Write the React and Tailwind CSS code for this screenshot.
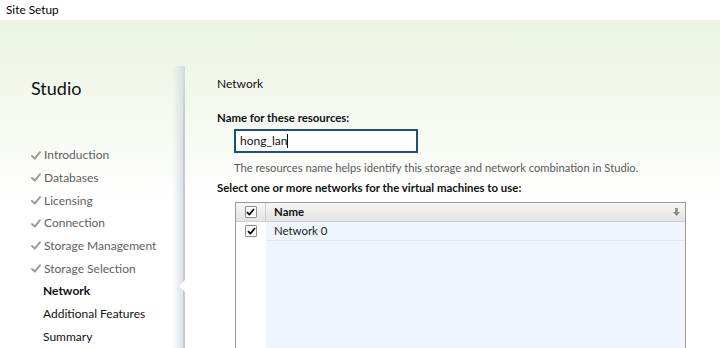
import React from "react";

const font = { fontFamily: 'Lato, "Open Sans", sans-serif' };

function Check({ className = "" }) {
  return (
    <svg width="10" height="9" viewBox="0 0 10 9" className={className}>
      <path d="M1 5 L3.8 7.6 L9 1.2" fill="none" stroke="currentColor" strokeWidth="2" strokeLinecap="round" strokeLinejoin="round" />
    </svg>
  );
}

function Box() {
  return (
    <div className="w-[12px] h-[12px] border border-[#8e8f8f] rounded-[1px] bg-gradient-to-br from-[#f3f3f3] to-white flex items-center justify-center text-[#111]">
      <svg width="9" height="8" viewBox="0 0 9 8">
        <path d="M1 4.2 L3.4 6.6 L8 1" fill="none" stroke="currentColor" strokeWidth="1.8" strokeLinejoin="round" />
      </svg>
    </div>
  );
}

const done = ["Introduction", "Databases", "Licensing", "Connection", "Storage Management", "Storage Selection"];
const todo = ["Network", "Additional Features", "Summary"];

export default function App() {
  return (
    <div className="w-[720px] h-[348px] flex flex-col overflow-hidden bg-white text-[11.4px]" style={font}>
      <div className="h-[25px] flex items-center pl-[6px] text-black bg-white text-[11.8px]">Site Setup</div>
      <div className="flex-1 flex bg-gradient-to-b from-[#ebf3e2] via-[#f5f9f0] via-30% to-white to-55%">
        <div className="relative w-[185px] shrink-0 pl-[31px]">
          <div className="absolute right-0 top-[46px] bottom-0 w-[13px] bg-gradient-to-r from-transparent to-[#d7dce2]" />
          <div className="absolute right-0 top-[46px] bottom-0 w-[2px] bg-gradient-to-b from-transparent via-[#c3c9d0] via-20% to-[#c3c9d0]" />
          <div className="absolute right-0 top-[260px] w-0 h-0 border-y-[6px] border-y-transparent border-r-[6px] border-r-white" />
          <div className="relative pt-[55px] text-[18px] leading-[26px] text-[#111]">Studio</div>
          <div className="relative mt-[43px] flex flex-col">
            {done.map((t) => (
              <div key={t} className="h-[22.7px] flex items-center text-[#606060] text-[12px]">
                <Check className="text-[#9a9a9a] mr-[3px]" />
                <span>{t}</span>
              </div>
            ))}
            {todo.map((t, i) => (
              <div key={t} className={`h-[22.7px] flex items-center pl-[12px] text-[#111] text-[12px] ${i === 0 ? "font-bold" : ""}`}>
                {t}
              </div>
            ))}
          </div>
        </div>
        <div className="flex-1 pl-[32px] flex flex-col text-[#111]">
          <div className="mt-[55px] h-[18px] leading-[18px] text-[12px]">Network</div>
          <div className="mt-[16px] h-[18px] leading-[18px] font-bold">Name for these resources:</div>
          <div className="mt-[2px] ml-[17px] w-[184px] h-[24px] border-2 border-[#1d4f7c] bg-white flex items-center pl-[4px] text-[12px]">
            <span>hong_lan</span>
            <span className="w-[1px] h-[14px] bg-black" />
          </div>
          <div className="mt-[6px] ml-[17px] h-[18px] leading-[18px] text-[#5a5a5a] text-[11.2px]">
            The resources name helps identify this storage and network combination in Studio.
          </div>
          <div className="mt-[2px] h-[18px] leading-[18px] font-bold">Select one or more networks for the virtual machines to use:</div>
          <div className="mt-[5px] ml-[18px] w-[451px] flex-1 border border-[#9a9a9a] border-b-0 flex flex-col bg-white">
            <div className="h-[19px] flex bg-gradient-to-b from-[#f7f7f7] to-[#e3e3e3] border-b border-[#d0d0d0]">
              <div className="w-[30px] border-r border-[#cfcfcf] flex items-center justify-center">
                <Box />
              </div>
              <div className="flex-1 flex items-center pl-[8px] font-bold">Name</div>
              <div className="w-[18px] flex items-center justify-center text-[#8a8a8a]">
                <svg width="7" height="8" viewBox="0 0 7 8">
                  <path d="M2.2 0 H4.8 V4 H7 L3.5 8 L0 4 H2.2 Z" fill="currentColor" />
                </svg>
              </div>
            </div>
            <div className="flex-1 flex">
              <div className="w-[30px] bg-white">
                <div className="h-[19px] flex items-center justify-center">
                  <Box />
                </div>
              </div>
              <div className="flex-1 bg-[#eef5fc]">
                <div className="h-[19px] flex items-center pl-[8px] border-b border-[#dde6ef] text-[#222]">Network 0</div>
              </div>
            </div>
          </div>
        </div>
      </div>
    </div>
  );
}
